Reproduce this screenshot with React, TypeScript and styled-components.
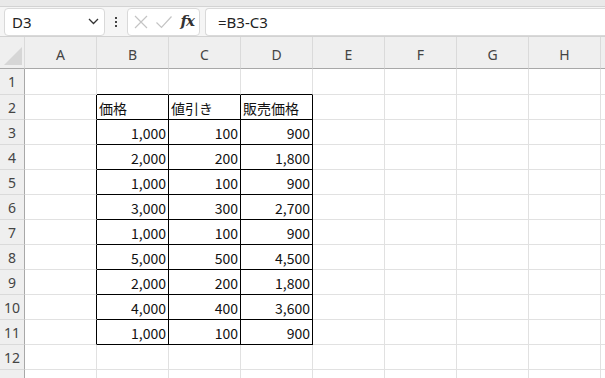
import { type FC } from "react";
import styled, { createGlobalStyle } from "styled-components";

const COLS = ["A", "B", "C", "D", "E", "F", "G", "H"];
const ROW_COUNT = 13;

const data: [number, number, number][] = [
  [1000, 100, 900],
  [2000, 200, 1800],
  [1000, 100, 900],
  [3000, 300, 2700],
  [1000, 100, 900],
  [5000, 500, 4500],
  [2000, 200, 1800],
  [4000, 400, 3600],
  [1000, 100, 900],
];

const headers = ["価格", "値引き", "販売価格"];

const fmt = (n: number) => n.toLocaleString("en-US");

// the bordered table sits at B2:D11
const inTable = (r: number, c: number) => r >= 2 && r <= 11 && c >= 1 && c <= 3;

const cellContent = (r: number, c: number) => {
  if (!inTable(r, c)) return { text: "", num: false };
  if (r === 2) return { text: headers[c - 1], num: false };
  return { text: fmt(data[r - 3][c - 1]), num: true };
};

const App: FC = () => {
  const rows = Array.from({ length: ROW_COUNT }, (_, i) => i + 1);

  return (
    <>
      <GlobalStyle />
      <Window>
        <TopStrip />
        <FormulaBar>
          <NameBox>
            <NameText>D3</NameText>
            <svg width="11" height="7" viewBox="0 0 11 7">
              <path d="M1 1 L5.5 5.5 L10 1" fill="none" stroke="#333" strokeWidth="1.3" />
            </svg>
          </NameBox>
          <Dots>
            <span />
            <span />
            <span />
          </Dots>
          <FxBox>
            <svg width="16" height="16" viewBox="0 0 16 16">
              <path d="M2 2 L14 14 M14 2 L2 14" stroke="#c4c4c4" strokeWidth="1.2" />
            </svg>
            <svg width="18" height="16" viewBox="0 0 18 16">
              <path d="M1.5 8.5 L6.5 13.5 L16.5 2.5" fill="none" stroke="#c4c4c4" strokeWidth="1.2" />
            </svg>
            <FxLabel>fx</FxLabel>
          </FxBox>
          <FormulaInput>=B3-C3</FormulaInput>
        </FormulaBar>

        <Sheet>
          <Corner>
            <svg width="18" height="18" viewBox="0 0 18 18">
              <path d="M18 0 L18 18 L0 18 Z" fill="#d6d6d6" />
            </svg>
          </Corner>
          {COLS.map((c) => (
            <ColHeader key={c}>{c}</ColHeader>
          ))}
          <ColHeader $tail />

          {rows.map((r) => (
            <RowGroup key={r} r={r} />
          ))}
        </Sheet>
      </Window>
    </>
  );
};

const RowGroup: FC<{ r: number }> = ({ r }) => (
  <>
    <RowHeader>{r}</RowHeader>
    {COLS.map((_, i) => {
      const { text, num } = cellContent(r, i);
      const blackRight = inTable(r, i) || inTable(r, i + 1);
      const blackBottom = inTable(r, i) || inTable(r + 1, i);
      return (
        <Cell key={i} $num={num} $right={blackRight} $bottom={blackBottom}>
          {text}
        </Cell>
      );
    })}
    <Cell $num={false} $right={false} $bottom={false} />
  </>
);

export default App;

const GlobalStyle = createGlobalStyle`
  html, body {
    margin: 0;
    padding: 0;
    background: #ffffff;
    overflow: hidden;
  }
`;

const Window = styled.div`
  width: 605px;
  height: 378px;
  overflow: hidden;
  display: flex;
  flex-direction: column;
  background: #fff;
  font-family: "Noto Sans", "Liberation Sans", sans-serif;
`;

const TopStrip = styled.div`
  height: 6px;
  background: #e9e9e9;
  border-bottom: 1px solid #d3d3d3;
  flex-shrink: 0;
`;

const FormulaBar = styled.div`
  height: 30px;
  flex-shrink: 0;
  display: flex;
  align-items: center;
  background: #f5f5f5;
  border-bottom: 1px solid #d2d2d2;
  padding-left: 4px;
  box-sizing: border-box;
`;

const NameBox = styled.div`
  width: 101px;
  height: 28px;
  box-sizing: border-box;
  background: #fff;
  border: 1px solid #d9d9d9;
  border-radius: 4px;
  display: flex;
  align-items: center;
  justify-content: space-between;
  padding: 0 5px 0 7px;
`;

const NameText = styled.span`
  font-family: "Noto Sans", sans-serif;
  font-size: 15px;
  color: #222;
`;

const Dots = styled.div`
  width: 22px;
  display: flex;
  flex-direction: column;
  align-items: center;
  gap: 2px;

  span {
    width: 2px;
    height: 2px;
    background: #444;
  }
`;

const FxBox = styled.div`
  width: 73px;
  height: 28px;
  box-sizing: border-box;
  background: #fff;
  border: 1px solid #d9d9d9;
  border-radius: 4px;
  display: flex;
  align-items: center;
  gap: 6px;
  padding: 0 4px 0 5px;
`;

const FxLabel = styled.span`
  margin-left: auto;
  font-family: "DejaVu Serif", "Liberation Serif", serif;
  font-style: italic;
  font-weight: bold;
  font-size: 15px;
  letter-spacing: -1px;
  color: #333;
  line-height: 1;
  padding-right: 1px;
`;

const FormulaInput = styled.div`
  flex: 1;
  margin-left: 5px;
  height: 28px;
  box-sizing: border-box;
  background: #fff;
  border: 1px solid #d9d9d9;
  border-right: none;
  border-radius: 4px 0 0 4px;
  display: flex;
  align-items: center;
  padding-left: 12px;
  font-family: "Noto Sans", sans-serif;
  font-size: 15px;
  color: #222;
`;

const Sheet = styled.div`
  display: grid;
  grid-template-columns: 25px repeat(8, 72px) 1fr;
  grid-template-rows: 32px 26px repeat(12, 25px);
  flex: 1;
  min-height: 0;
  overflow: hidden;
`;

const Corner = styled.div`
  background: #efefef;
  border-bottom: 1px solid #a8a8a8;
  border-right: 1px solid #dadada;
  display: flex;
  align-items: flex-end;
  justify-content: flex-end;
  padding: 0 2px 3px 0;
  box-sizing: border-box;
`;

const ColHeader = styled.div<{ $tail?: boolean }>`
  background: #efefef;
  border-bottom: 1px solid #a8a8a8;
  border-right: ${(p) => (p.$tail ? "none" : "1px solid #dadada")};
  box-sizing: border-box;
  display: flex;
  align-items: center;
  justify-content: center;
  padding-top: 3px;
  font-family: "Noto Sans", sans-serif;
  font-size: 14px;
  color: #444;
`;

const RowHeader = styled.div`
  background: #efefef;
  border-right: 1px solid #a8a8a8;
  border-bottom: 1px solid #dadada;
  box-sizing: border-box;
  display: flex;
  align-items: center;
  justify-content: center;
  font-family: "Noto Sans", sans-serif;
  font-size: 14px;
  color: #444;
`;

const Cell = styled.div<{ $num: boolean; $right: boolean; $bottom: boolean }>`
  box-sizing: border-box;
  border-right: 1px solid ${(p) => (p.$right ? "#000" : "#e1e1e1")};
  border-bottom: 1px solid ${(p) => (p.$bottom ? "#000" : "#e1e1e1")};
  display: flex;
  align-items: center;
  justify-content: ${(p) => (p.$num ? "flex-end" : "flex-start")};
  padding: 1px 2px 0 2px;
  font-family: "Noto Sans CJK JP", "Noto Sans", sans-serif;
  font-size: 14px;
  color: #111;
  white-space: nowrap;
  overflow: hidden;
`;
